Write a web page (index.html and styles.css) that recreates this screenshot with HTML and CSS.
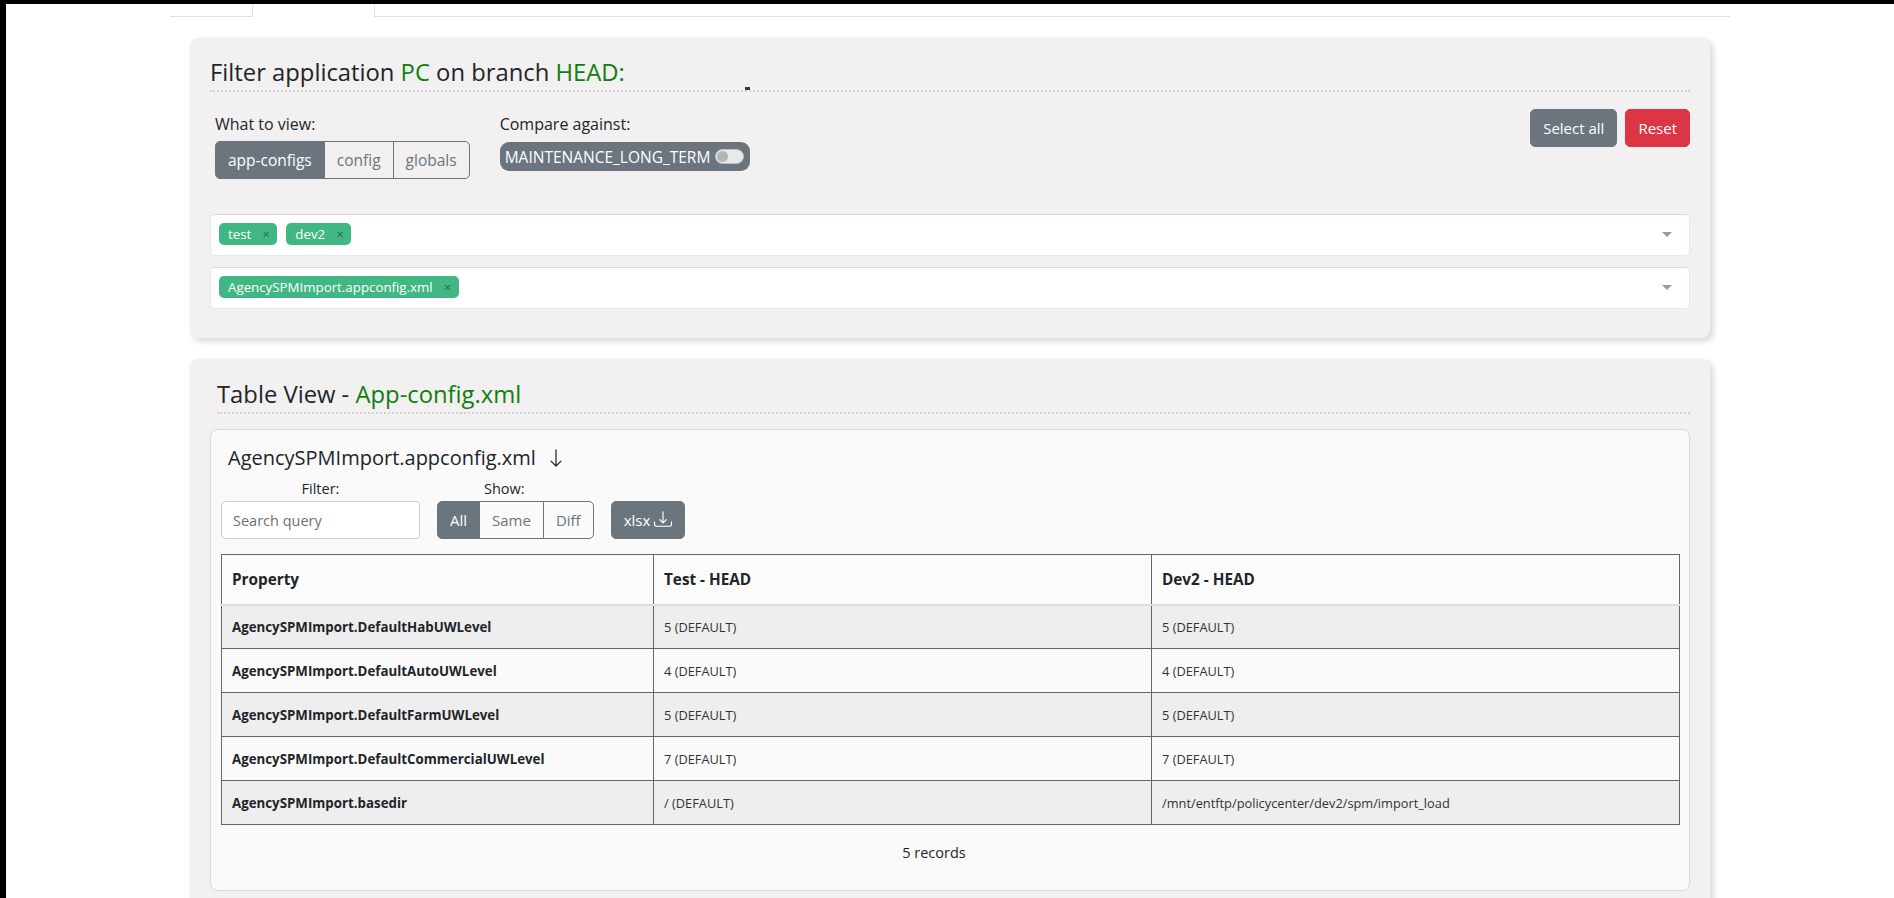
FILE: index.html
```html
<!DOCTYPE html>
<html lang="en">
<head>
<meta charset="utf-8">
<title>Config compare</title>
<link rel="stylesheet" href="styles.css">
</head>
<body>
<div class="container">
  <div class="tabs">
    <div class="tab tab-first"></div>
    <div class="tab tab-active"></div>
    <div class="tab tab-rest"></div>
  </div>

  <div class="cards">
    <section class="card card-filter">
      <h4 class="card-title">Filter application <span class="green">PC</span> on branch <span class="green">HEAD:</span></h4>
      <span class="mark"></span>

      <div class="controls">
        <div class="field field-view">
          <div class="field-label">What to view:</div>
          <div class="btn-group">
            <button class="btn btn-dark">app-configs</button>
            <button class="btn btn-outline">config</button>
            <button class="btn btn-outline">globals</button>
          </div>
        </div>
        <div class="field field-compare">
          <div class="field-label">Compare against:</div>
          <div class="pill">
            <span>MAINTENANCE_LONG_TERM</span>
            <span class="switch"><span class="knob"></span></span>
          </div>
        </div>
        <div class="actions">
          <button class="btn btn-dark">Select all</button>
          <button class="btn btn-danger">Reset</button>
        </div>
      </div>

      <div class="ms ms-first">
        <span class="tag">test<span class="tag-x">×</span></span><span class="tag">dev2<span class="tag-x">×</span></span>
        <span class="caret"></span>
      </div>
      <div class="ms ms-second">
        <span class="tag">AgencySPMImport.appconfig.xml<span class="tag-x">×</span></span>
        <span class="caret"></span>
      </div>
    </section>

    <section class="card card-table">
      <h4 class="card-title title-indent">Table View - <span class="green">App-config.xml</span></h4>

      <div class="inner">
        <h5 class="inner-title">AgencySPMImport.appconfig.xml
          <svg class="arrow" viewBox="0 0 16 16" width="20" height="20"><path fill="#212529" fill-rule="evenodd" d="M8 1a.5.5 0 0 1 .5.5v11.793l3.146-3.147a.5.5 0 0 1 .708.708l-4 4a.5.5 0 0 1-.708 0l-4-4a.5.5 0 0 1 .708-.708L7.5 13.293V1.5A.5.5 0 0 1 8 1z"/></svg>
        </h5>

        <div class="toolbar">
          <div class="tool tool-filter">
            <div class="tool-label">Filter:</div>
            <input class="search" type="text" placeholder="Search query">
          </div>
          <div class="tool tool-show">
            <div class="tool-label show-label">Show:</div>
            <div class="btn-group">
              <button class="btn btn-dark">All</button>
              <button class="btn btn-outline">Same</button>
              <button class="btn btn-outline">Diff</button>
            </div>
          </div>
          <button class="btn btn-dark btn-xlsx">xlsx
            <svg viewBox="0 0 16 16" width="18" height="18"><path fill="#fff" d="M.5 9.9a.5.5 0 0 1 .5.5v2.5a1 1 0 0 0 1 1h12a1 1 0 0 0 1-1v-2.5a.5.5 0 0 1 1 0v2.5a2 2 0 0 1-2 2H2a2 2 0 0 1-2-2v-2.5a.5.5 0 0 1 .5-.5z"/><path fill="#fff" d="M7.646 11.854a.5.5 0 0 0 .708 0l3-3a.5.5 0 0 0-.708-.708L8.5 10.293V1.5a.5.5 0 0 0-1 0v8.793L5.354 8.146a.5.5 0 1 0-.708.708l3 3z"/></svg>
          </button>
        </div>

        <table class="grid">
          <colgroup>
            <col class="col-prop"><col class="col-test"><col class="col-dev">
          </colgroup>
          <thead>
            <tr><th>Property</th><th>Test - HEAD</th><th>Dev2 - HEAD</th></tr>
          </thead>
          <tbody>
            <tr><td class="prop">AgencySPMImport.DefaultHabUWLevel</td><td>5 (DEFAULT)</td><td>5 (DEFAULT)</td></tr>
            <tr><td class="prop">AgencySPMImport.DefaultAutoUWLevel</td><td>4 (DEFAULT)</td><td>4 (DEFAULT)</td></tr>
            <tr><td class="prop">AgencySPMImport.DefaultFarmUWLevel</td><td>5 (DEFAULT)</td><td>5 (DEFAULT)</td></tr>
            <tr><td class="prop">AgencySPMImport.DefaultCommercialUWLevel</td><td>7 (DEFAULT)</td><td>7 (DEFAULT)</td></tr>
            <tr><td class="prop">AgencySPMImport.basedir</td><td>/ (DEFAULT)</td><td>/mnt/entftp/policycenter/dev2/spm/import_load</td></tr>
          </tbody>
        </table>

        <div class="records">5 records</div>
      </div>
    </section>
  </div>
</div>
</body>
</html>
```

FILE: styles.css
```css
* { box-sizing: border-box; }

html, body { height: 100%; }

body {
  margin: 0;
  border-top: 4px solid #000;
  border-left: 6px solid #000;
  min-height: 100vh;
  background: #fff;
  color: #212529;
  font-family: "Open Sans", "Noto Sans", sans-serif;
  font-size: 15px;
  overflow: hidden;
}

.container {
  width: 1560px;
  margin: 0 auto;
}

/* tabs (scrolled, only bottom part visible) */
.tabs {
  display: flex;
  height: 13px;
}
.tab-first {
  width: 82px;
  border-bottom: 1px solid #dee2e6;
}
.tab-active {
  width: 123px;
  border-left: 1px solid #dee2e6;
  border-right: 1px solid #dee2e6;
}
.tab-rest {
  flex: 1;
  border-bottom: 1px solid #dee2e6;
}

.cards {
  padding: 0 20px;
}

.card {
  position: relative;
  background: #f2f0f0;
  border-radius: 8px;
  box-shadow: 3px 3px 6px rgba(0, 0, 0, 0.16);
  margin-top: 21px;
}

.card-filter {
  padding: 20px 20px 29px;
}

.card-table {
  padding: 21px 20px 20px;
}

.card-title {
  margin: 0;
  font-size: 23.8px;
  font-weight: 400;
  line-height: 29px;
  padding-bottom: 3px;
  border-bottom: 2px dotted #d3d1d1;
  color: #212529;
}
.title-indent {
  margin-left: 7px;
}

.green { color: #0f800f; }

.mark {
  position: absolute;
  left: 555px;
  top: 49px;
  width: 5px;
  height: 3px;
  background: #1d4a1d;
}

/* controls */
.controls {
  display: flex;
  align-items: flex-start;
  margin-top: 14px;
}
.field {
  padding-top: 6px;
}
.field-view { margin-left: 5px; }
.field-compare { margin-left: 30px; }
.field-label {
  font-size: 16px;
  line-height: 24px;
  margin-bottom: 5px;
}
.field-compare .field-label { margin-bottom: 6px; }

.btn-group {
  display: flex;
}
.btn {
  font-family: inherit;
  font-size: 15.5px;
  height: 38px;
  padding: 0 12px;
  border: 1px solid #6c757d;
  border-radius: 5px;
  background: transparent;
  color: #6c757d;
  line-height: 36px;
  cursor: pointer;
}
.btn-group .btn { border-radius: 0; }
.btn-group .btn + .btn { margin-left: -1px; }
.btn-group .btn:first-child { border-radius: 5px 0 0 5px; }
.btn-group .btn:last-child { border-radius: 0 5px 5px 0; }

.btn-dark {
  background: #6c757d;
  color: #fff;
}
.btn-danger {
  background: #dc3545;
  border-color: #dc3545;
  color: #fff;
}

.pill {
  display: inline-flex;
  align-items: center;
  height: 29px;
  padding: 0 6px 0 5px;
  border-radius: 9px;
  background: #6c757d;
  color: #fff;
  font-size: 15.5px;
  gap: 5px;
}
.switch {
  position: relative;
  display: inline-block;
  width: 29px;
  height: 15px;
  border-radius: 8px;
  background: #e9e9e9;
  border: 1px solid #bfbfbf;
}
.knob {
  position: absolute;
  left: 1px;
  top: 1px;
  width: 11px;
  height: 11px;
  border-radius: 50%;
  background: #b1b6bb;
}

.actions {
  margin-left: auto;
  margin-top: 3px;
  display: flex;
  gap: 8px;
}
.actions .btn { font-size: 15px; }

/* multiselect */
.ms {
  position: relative;
  height: 42px;
  background: #fff;
  border: 1px solid #e8e8e8;
  border-top-color: #dadada;
  border-radius: 5px;
  padding: 8px 40px 0 8px;
  display: flex;
  align-items: flex-start;
}
.ms-first { margin-top: 35px; }
.ms-second { margin-top: 11px; }

.tag {
  position: relative;
  display: inline-block;
  height: 22px;
  padding: 4px 26px 4px 9px;
  border-radius: 5px;
  margin-right: 9px;
  background: #41b883;
  color: #fff;
  font-size: 13.3px;
  line-height: 14px;
}
.tag-x {
  position: absolute;
  right: 0;
  top: 0;
  width: 22px;
  height: 22px;
  text-align: center;
  line-height: 22px;
  color: #266d4d;
  font-size: 13px;
}
.caret {
  position: absolute;
  right: 17px;
  top: 17px;
  width: 0;
  height: 0;
  border-style: solid;
  border-width: 5px 5px 0;
  border-color: #999 transparent transparent;
}

/* inner card */
.inner {
  margin-top: 15px;
  background: #fafafa;
  border: 1px solid #d9d9d9;
  border-radius: 8px;
  padding: 0 10px 26px;
}
.inner-title {
  margin: 15px 0 0 7px;
  font-size: 20px;
  font-weight: 400;
  line-height: 26px;
  display: flex;
  align-items: center;
  gap: 10px;
}
.arrow { display: block; }

.toolbar {
  display: flex;
  align-items: flex-end;
  margin-top: 7px;
}
.tool-label {
  text-align: center;
  font-size: 14.5px;
  line-height: 22px;
  margin-bottom: 1px;
}
.tool-filter { width: 199px; }
.tool-show { margin-left: 17px; }
.tool-show .btn { font-size: 15px; }
.show-label { padding-right: 22px; }
.search {
  display: block;
  width: 199px;
  height: 38px;
  border: 1px solid #cfcfcf;
  border-radius: 4px;
  background: #fff;
  padding: 0 11px;
  font-family: inherit;
  font-size: 14.5px;
  color: #212529;
}
.search::placeholder { color: #6f6f6f; }

.btn-xlsx {
  margin-left: 17px;
  display: inline-flex;
  align-items: center;
  gap: 4px;
  font-size: 15px;
  padding: 0 12px;
}
.btn-xlsx svg { margin-top: -3px; }

/* table */
.grid {
  margin-top: 15px;
  width: 1458px;
  border-collapse: collapse;
  table-layout: fixed;
  border: 1px solid #666;
}
.col-prop { width: 432px; }
.col-test { width: 498px; }
.col-dev { width: 528px; }

.grid th {
  height: 50px;
  text-align: left;
  padding: 0 10px;
  font-size: 15.3px;
  font-weight: 700;
  background: #fbfbfb;
  border-left: 1px solid #666;
  border-right: 1px solid #666;
  border-bottom: 2px solid #dedede;
}
.grid td {
  height: 44px;
  padding: 0 10px;
  font-size: 12.8px;
  color: #333;
  border: 1px solid #666;
}
.grid tbody tr:nth-child(odd) td { background: #eeeeee; }
.grid tbody tr:nth-child(even) td { background: #fafafa; }
.grid td.prop {
  font-weight: 700;
  font-size: 13.3px;
  color: #212529;
}
.grid tbody tr:first-child td { border-top: 2px solid #dedede; }

.records {
  margin-top: 17px;
  padding-right: 32px;
  text-align: center;
  font-size: 14.5px;
  line-height: 22px;
}
```
